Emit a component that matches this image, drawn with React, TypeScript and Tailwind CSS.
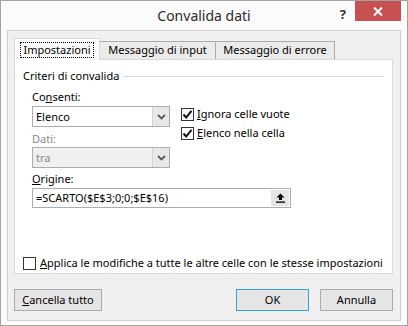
import React from "react"

const Chevron = () => (
	<svg width="9" height="6" viewBox="0 0 9 6" className="text-[#5a5a5a]">
		<path d="M1 1 L4.5 4.5 L8 1" fill="none" stroke="currentColor" strokeWidth="1.8" />
	</svg>
)

const Check = () => (
	<svg width="11" height="11" viewBox="0 0 11 11">
		<path d="M1.5 5.5 L4.2 8.5 L9.5 1.8" fill="none" stroke="#111" strokeWidth="2" />
	</svg>
)

const CheckBox = ({ checked }: { checked?: boolean }) => (
	<span className="flex h-[13px] w-[13px] shrink-0 items-center justify-center border border-[#333] bg-white">
		{checked && <Check />}
	</span>
)

type SelectProps = { value: string; disabled?: boolean }

const Select = ({ value, disabled }: SelectProps) => (
	<div
		className={`flex h-[21px] w-[138px] border border-[#acacac] ${disabled ? "bg-[#f0f0f0] text-[#8a8a8a]" : "bg-white text-black"}`}
	>
		<span className="flex-1 pl-[3px] leading-[19px]">{value}</span>
		<span className="flex w-[17px] items-center justify-center border-l border-[#d4d4d4] bg-[#e8e8e8]">
			<Chevron />
		</span>
	</div>
)

const Button = ({ children, primary, className = "" }: { children: React.ReactNode; primary?: boolean; className?: string }) => (
	<div
		className={`flex h-[22px] items-center justify-center border bg-[#e5e5e5] text-black ${primary ? "border-[#3c9be5]" : "border-[#acacac]"} ${className}`}
	>
		{children}
	</div>
)

export default function App() {
	return (
		<div className="flex h-[326px] w-[408px] flex-col border border-[#a3a3a3] bg-[#fbfbfb] font-['Noto_Sans',sans-serif] text-[11px] text-black">
			{/* title bar */}
			<div className="relative flex h-[29px] shrink-0 items-center justify-center">
				<span className="text-[14px] text-[#2b2b2b]">Convalida dati</span>
				<span className="absolute right-[61px] top-[4px] text-[13px] font-bold text-[#333]">?</span>
				<div className="absolute right-[6px] top-0 flex h-[20px] w-[46px] items-center justify-center bg-[#c75050]">
					<svg width="10" height="9" viewBox="0 0 10 9">
						<path d="M1 0.5 L9 8.5 M9 0.5 L1 8.5" stroke="#fff" strokeWidth="2" />
					</svg>
				</div>
			</div>

			{/* inner frame */}
			<div className="mx-[6px] mb-[5px] flex flex-1 flex-col border border-[#cfcfcf] bg-[#f0f0f0] pl-[6px] pr-[7px] pt-[7px] pb-[9px]">
				{/* tabs */}
				<div className="flex h-[21px] items-end whitespace-nowrap">
					<div className="relative z-10 -mb-px flex h-[22px] w-[86px] items-start justify-center border border-b-0 border-[#d9d9d9] bg-white pt-[3px]">
						<span className="border border-dotted border-black px-[2px] leading-[14px]">Impostazioni</span>
					</div>
					<div className="flex h-[18px] w-[116px] items-center justify-center border border-l-0 border-b-0 border-[#acacac] bg-[#ebebeb]">
						Messaggio di input
					</div>
					<div className="flex h-[18px] w-[119px] items-center justify-center border border-l-0 border-b-0 border-[#acacac] bg-[#ebebeb]">
						Messaggio di errore
					</div>
				</div>

				{/* tab panel */}
				<div className="flex h-[215px] flex-col border border-[#d9d9d9] bg-white px-[8px]">
					<div className="mt-[8px] flex h-[16px] items-center">
						<span>Criteri di convalida</span>
						<span className="ml-[4px] h-px flex-1 bg-[#dcdcdc]" />
					</div>

					<div className="flex flex-col pl-[9px]">
						<div className="flex">
							<div className="flex w-[138px] flex-col">
								<span className="mt-[5px] h-[16px] leading-[16px]">
									Co<u>n</u>senti:
								</span>
								<div className="mt-px">
									<Select value="Elenco" />
								</div>
								<span className="mt-[4px] h-[16px] leading-[16px] text-[#8a8a8a]">Dati:</span>
								<Select value="tra" disabled />
							</div>

							<div className="ml-[11px] mt-[21px] flex flex-col whitespace-nowrap">
								<label className="flex h-[19px] items-center gap-[3px]">
									<CheckBox checked />
									<span>
										<u>I</u>gnora celle vuote
									</span>
								</label>
								<label className="flex h-[19px] items-center gap-[3px]">
									<CheckBox checked />
									<span>
										<u>E</u>lenco nella cella
									</span>
								</label>
							</div>
						</div>

						<span className="mt-[3px] h-[16px] leading-[16px]">
							<u>O</u>rigine:
						</span>
						<div className="mt-px flex h-[20px] w-[259px] border border-[#acacac] bg-white">
							<span className="flex-1 pl-[3px] leading-[18px]">=SCARTO($E$3;0;0;$E$16)</span>
							<span className="m-px flex w-[18px] items-center justify-center bg-[#e5e5e5]">
								<svg width="9" height="10" viewBox="0 0 9 10">
									<path d="M4.5 0.5 L8.5 4.5 H6 V7 H3 V4.5 H0.5 Z" fill="#000" />
									<rect x="0" y="8.5" width="9" height="1.3" fill="#000" />
								</svg>
							</span>
						</div>
					</div>

					<label className="mb-[2px] mt-auto flex h-[16px] items-center gap-[4px] whitespace-nowrap">
						<CheckBox />
						<span>
							<u>A</u>pplica le modifiche a tutte le altre celle con le stesse impostazioni
						</span>
					</label>
				</div>

				{/* buttons */}
				<div className="mt-[15px] flex">
					<Button className="w-[88px]">
						<span>
							<u>C</u>ancella tutto
						</span>
					</Button>
					<Button primary className="ml-auto w-[73px]">
						OK
					</Button>
					<Button className="ml-[11px] w-[73px]">Annulla</Button>
				</div>
			</div>
		</div>
	)
}
